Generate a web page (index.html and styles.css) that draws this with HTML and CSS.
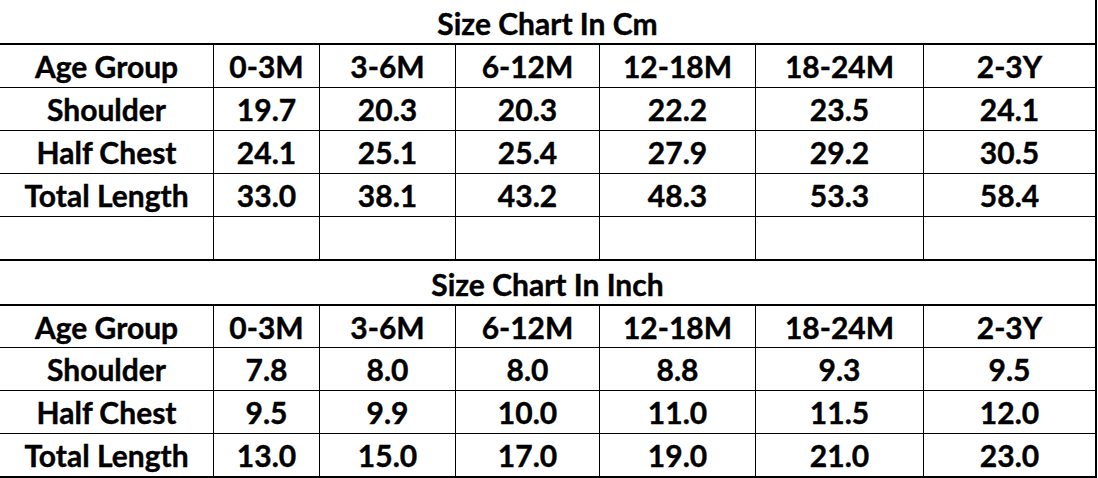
FILE: index.html
```html
<!DOCTYPE html>
<html>
<head>
<meta charset="utf-8">
<link rel="stylesheet" href="styles.css">
</head>
<body>
<div class="chart">
  <div class="cell title r-title1">Size Chart In Cm</div>

  <div class="cell r43">Age Group</div><div class="cell r43">0-3M</div><div class="cell r43">3-6M</div><div class="cell r43">6-12M</div><div class="cell r43">12-18M</div><div class="cell r43">18-24M</div><div class="cell r43 end">2-3Y</div>
  <div class="cell r43">Shoulder</div><div class="cell r43">19.7</div><div class="cell r43">20.3</div><div class="cell r43">20.3</div><div class="cell r43">22.2</div><div class="cell r43">23.5</div><div class="cell r43 end">24.1</div>
  <div class="cell r43">Half Chest</div><div class="cell r43">24.1</div><div class="cell r43">25.1</div><div class="cell r43">25.4</div><div class="cell r43">27.9</div><div class="cell r43">29.2</div><div class="cell r43 end">30.5</div>
  <div class="cell r43">Total Length</div><div class="cell r43">33.0</div><div class="cell r43">38.1</div><div class="cell r43">43.2</div><div class="cell r43">48.3</div><div class="cell r43">53.3</div><div class="cell r43 end">58.4</div>
  <div class="cell spacer"></div><div class="cell spacer"></div><div class="cell spacer"></div><div class="cell spacer"></div><div class="cell spacer"></div><div class="cell spacer"></div><div class="cell spacer end"></div>

  <div class="cell title r-title2">Size Chart In Inch</div>

  <div class="cell r42">Age Group</div><div class="cell r42">0-3M</div><div class="cell r42">3-6M</div><div class="cell r42">6-12M</div><div class="cell r42">12-18M</div><div class="cell r42">18-24M</div><div class="cell r42 end">2-3Y</div>
  <div class="cell r43">Shoulder</div><div class="cell r43">7.8</div><div class="cell r43">8.0</div><div class="cell r43">8.0</div><div class="cell r43">8.8</div><div class="cell r43">9.3</div><div class="cell r43 end">9.5</div>
  <div class="cell r43">Half Chest</div><div class="cell r43">9.5</div><div class="cell r43">9.9</div><div class="cell r43">10.0</div><div class="cell r43">11.0</div><div class="cell r43">11.5</div><div class="cell r43 end">12.0</div>
  <div class="cell last">Total Length</div><div class="cell last">13.0</div><div class="cell last">15.0</div><div class="cell last">17.0</div><div class="cell last">19.0</div><div class="cell last">21.0</div><div class="cell last end">23.0</div>
</div>
</body>
</html>
```

FILE: styles.css
```css
html, body {
  margin: 0;
  padding: 0;
  background: #ffffff;
}

.chart {
  display: grid;
  grid-template-columns: 214px 106px 136px 144px 156px 168px 173px;
  width: 1097px;
  font-family: "Lato", "Liberation Sans", sans-serif;
  font-weight: 700;
  font-size: 30px;
  line-height: 1;
  color: #000000;
  -webkit-text-stroke: 0.4px #000000;
}

.cell {
  box-sizing: border-box;
  display: flex;
  align-items: center;
  justify-content: center;
  border-right: 1px solid #000;
  border-bottom: 1px solid #000;
  white-space: nowrap;
}

.cell.end {
  border-right-width: 2px;
}

.title {
  grid-column: 1 / -1;
  border-right-width: 2px;
  border-bottom-width: 2px;
  padding-top: 2px;
  height: 45px;
}

.r43 { height: 43px; }
.r42 { height: 42px; }

.spacer {
  height: 44px;
  border-bottom-width: 2px;
}

.last {
  height: 44px;
  border-bottom-width: 2px;
}
```
